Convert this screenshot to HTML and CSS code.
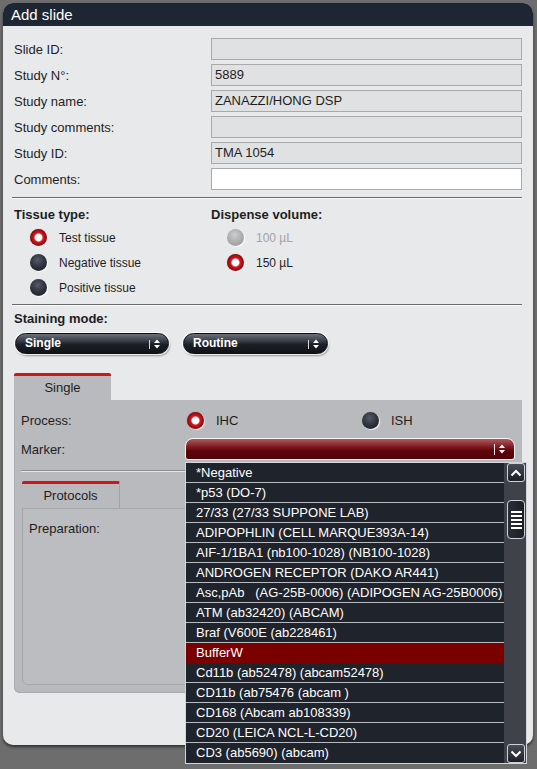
FILE: index.html
```html
<!DOCTYPE html>
<html lang="en">
  <head>
    <meta charset="UTF-8" />
    <meta name="viewport" content="width=device-width, initial-scale=1.0" />
    <title>Add slide</title>
    <link rel="stylesheet" href="styles.css">
  </head>
  <body>
    <div class="dialog">
      <div class="dialog-title">Add slide</div>
      <div class="dialog-body">
        <div class="fields">
          <label>Slide ID:</label><div class="field"></div>
          <label>Study N°:</label><div class="field">5889</div>
          <label>Study name:</label><div class="field">ZANAZZI/HONG DSP</div>
          <label>Study comments:</label><div class="field"></div>
          <label>Study ID:</label><div class="field">TMA 1054</div>
          <label>Comments:</label><div class="field editable"></div>
        </div>

        <hr class="sep sep-first">

        <div class="options">
          <div class="group">
            <div class="group-title">Tissue type:</div>
            <div class="radio-row"><span class="radio on"></span>Test tissue</div>
            <div class="radio-row"><span class="radio"></span>Negative tissue</div>
            <div class="radio-row"><span class="radio"></span>Positive tissue</div>
          </div>
          <div class="group">
            <div class="group-title">Dispense volume:</div>
            <div class="radio-row disabled"><span class="radio off"></span>100 µL</div>
            <div class="radio-row"><span class="radio on"></span>150 µL</div>
          </div>
        </div>

        <hr class="sep sep-second">

        <div class="group-title staining">Staining mode:</div>
        <div class="selects">
          <div class="pill pill-mode">
            <span>Single</span>
            <svg width="14" height="12" viewBox="0 0 14 12"><line x1="1.5" y1="2" x2="1.5" y2="11" stroke="#d8d8d8" /><path d="M6 5 L9 1.5 L12 5Z M6 7 L9 10.5 L12 7Z" fill="#fff" /></svg>
          </div>
          <div class="pill pill-type">
            <span>Routine</span>
            <svg width="14" height="12" viewBox="0 0 14 12"><line x1="1.5" y1="2" x2="1.5" y2="11" stroke="#d8d8d8" /><path d="M6 5 L9 1.5 L12 5Z M6 7 L9 10.5 L12 7Z" fill="#fff" /></svg>
          </div>
        </div>

        <div class="tabs"><div class="tab">Single</div></div>
        <div class="panel">
          <div class="process-row">
            <span>Process:</span>
            <div class="choice"><span class="radio on"></span>IHC</div>
            <div class="choice"><span class="radio"></span>ISH</div>
          </div>
          <div class="marker-row">
            <span>Marker:</span>
            <div class="marker-select">
              <svg width="14" height="12" viewBox="0 0 14 12"><line x1="1.5" y1="1" x2="1.5" y2="12" stroke="#e8e8e8" /><path d="M6 5 L9 1.5 L12 5Z M6 7 L9 10.5 L12 7Z" fill="#fff" /></svg>
            </div>
          </div>
          <hr class="panel-sep">
          <div class="tabs inner-tabs"><div class="tab tab-protocols">Protocols</div></div>
          <div class="inner-panel">
            <div>Preparation:</div>
          </div>
        </div>
      </div>

      <div class="dropdown">
        <ul class="options-list">
          <li>*Negative</li>
          <li>*p53 (DO-7)</li>
          <li>27/33 (27/33 SUPPONE LAB)</li>
          <li>ADIPOPHLIN (CELL MARQUE393A-14)</li>
          <li>AIF-1/1BA1 (nb100-1028) (NB100-1028)</li>
          <li>ANDROGEN RECEPTOR (DAKO AR441)</li>
          <li>Asc,pAb &nbsp; (AG-25B-0006) (ADIPOGEN AG-25B0006)</li>
          <li>ATM (ab32420) (ABCAM)</li>
          <li>Braf (V600E (ab228461)</li>
          <li class="active">BufferW</li>
          <li>Cd11b (ab52478) (abcam52478)</li>
          <li>CD11b (ab75476 (abcam )</li>
          <li>CD168 (Abcam ab108339)</li>
          <li>CD20 (LEICA NCL-L-CD20)</li>
          <li>CD3 (ab5690) (abcam)</li>
        </ul>
        <div class="scroll">
          <div class="scroll-btn">
            <svg width="12" height="8" viewBox="0 0 12 8"><polyline points="1.5,6.5 6,2 10.5,6.5" fill="none" stroke="#fff" stroke-width="2" /></svg>
          </div>
          <div class="thumb">
            <span></span><span></span><span></span><span></span><span></span>
          </div>
          <div class="scroll-btn down">
            <svg width="12" height="8" viewBox="0 0 12 8"><polyline points="1.5,1.5 6,6 10.5,1.5" fill="none" stroke="#fff" stroke-width="2" /></svg>
          </div>
        </div>
      </div>
    </div>
  </body>
</html>
```

FILE: styles.css
```css
html {
  background-color: #6d6d6d;
}

body {
  margin: 0;
  min-height: 769px;
  padding-top: 3px;
  box-sizing: border-box;
  font-family: "Liberation Sans", Arial, sans-serif;
  font-size: 13px;
  color: #1e1e1e;
}

.dialog {
  position: relative;
  margin-left: 3px;
  width: 530px;
  height: 742px;
  background-color: #e8e9eb;
  border-radius: 10px;
  box-shadow: 0 2px 3px rgba(0, 0, 0, 0.55);
}

.dialog-title {
  height: 23px;
  line-height: 23px;
  padding-left: 8px;
  background-color: #1f2633;
  color: white;
  font-size: 15px;
  border-radius: 10px 10px 0 0;
}

.dialog-body {
  padding: 12px 11px 0 11px;
}

/* study fields */
.fields {
  display: grid;
  grid-template-columns: 197px 1fr;
  row-gap: 4px;
  align-items: center;
}

.field {
  height: 20px;
  line-height: 20px;
  padding: 0 3px;
  border: 1px solid #a9a9a9;
  background-color: #e0e1e3;
}

.field.editable {
  background-color: white;
}

.sep {
  height: 0;
  border: 0;
  border-top: 1px solid #6a6a6a;
  border-bottom: 1px solid #fafafa;
  margin: 0 0 0 -2px;
}

.sep-first {
  margin-top: 7px;
}

.sep-second {
  margin-top: 4px;
}

/* radios */
.options {
  display: grid;
  grid-template-columns: 197px 1fr;
  margin-top: 9px;
}

.group-title {
  font-weight: bold;
  line-height: 14px;
  margin-bottom: 3px;
}

.radio-row {
  display: flex;
  align-items: center;
  height: 25px;
  padding-left: 16px;
  font-size: 12px;
}

.radio-row.disabled {
  color: #a3a3a3;
}

.radio {
  flex: none;
  width: 17px;
  height: 17px;
  margin-right: 12px;
  border-radius: 50%;
  background: radial-gradient(circle at 45% 35%, #545b68 0, #2a2f38 55%, #1a1d24 100%);
  box-shadow: 1px 1px 1px rgba(255, 255, 255, 0.9);
}

.radio.on {
  background: radial-gradient(circle, #fff 0, #fff 3.3px, #d11b22 4.6px, #b30f15 6.5px, #7c070b 8.5px);
  box-shadow: 1px 1px 1px rgba(255, 255, 255, 0.9), 0 0 1px rgba(0, 0, 0, 0.4);
}

.radio.off {
  background: radial-gradient(circle at 45% 35%, #cdcdcd 0, #a8a8a8 60%, #939393 100%);
}

/* staining selects */
.staining {
  margin-top: 6px;
}

.selects {
  display: flex;
  gap: 14px;
  margin-top: 7px;
  padding-left: 1px;
}

.pill {
  display: flex;
  align-items: center;
  justify-content: space-between;
  box-sizing: border-box;
  height: 21px;
  padding: 0 6px 0 9px;
  border: 1px solid #0d0f13;
  border-radius: 11px;
  background: linear-gradient(#6b707b 0%, #3a3f49 35%, #1c1f26 55%, #111318 100%);
  box-shadow: 0 0 0 1px rgba(255, 255, 255, 0.8), 1px 2px 2px rgba(0, 0, 0, 0.35);
  color: white;
  font-size: 12px;
  font-weight: bold;
}

.pill span {
  margin-top: -2px;
}

.pill-mode {
  width: 154px;
}

.pill-type {
  width: 145px;
}

/* tabs */
.tabs {
  display: flex;
  margin-top: 19px;
}

.tab {
  width: 97px;
  height: 24px;
  line-height: 24px;
  text-align: center;
  background-color: #b9babd;
  border-top: 3px solid #d0161b;
  border-radius: 2px 2px 0 0;
}

.panel {
  box-sizing: border-box;
  height: 293px;
  padding: 10px 7px 0;
  background-color: #b9babd;
  border-radius: 0 0 6px 6px;
  box-shadow: inset 0 -1px 0 #a9aaad, inset 1px 0 0 #aeafb2;
}

.process-row {
  display: grid;
  grid-template-columns: 165px 175px 1fr;
  align-items: center;
  height: 20px;
}

.choice {
  display: flex;
  align-items: center;
  padding-left: 1px;
}

.marker-row {
  display: grid;
  grid-template-columns: 164px 1fr;
  align-items: center;
  height: 22px;
  margin-top: 8px;
}

.marker-select {
  display: flex;
  justify-content: flex-end;
  align-items: center;
  box-sizing: border-box;
  height: 22px;
  padding-right: 7px;
  border: 1px solid #f4f4f4;
  border-radius: 8px 8px 3px 3px;
  background: linear-gradient(#ad5b5e 0%, #7e1a20 40%, #5e040a 60%, #52020a 100%);
}

.panel-sep {
  height: 0;
  margin: 10px 0 0 0;
  border: 0;
  border-top: 1px solid #8b8c8f;
  border-bottom: 1px solid #e4e5e7;
}

.inner-tabs {
  margin-top: 9px;
  padding-left: 1px;
}

.tab-protocols {
  width: 97px;
  border-right: 1px solid #a3a4a7;
}

.inner-panel {
  box-sizing: border-box;
  height: 177px;
  margin: 0 1px;
  padding: 12px 6px;
  background-color: #bcbdc0;
  border: 1px solid #a6a7aa;
  border-radius: 0 0 6px 6px;
}

/* marker dropdown list */
.dropdown {
  position: absolute;
  left: 182px;
  top: 459px;
  display: flex;
  width: 340px;
  height: 300px;
  border: 1px solid #d4d6da;
  background-color: #1f232c;
}

.options-list {
  width: 318px;
  margin: 0;
  padding: 0;
  list-style: none;
}

.options-list li {
  height: 19px;
  line-height: 20px;
  padding-left: 10px;
  border-bottom: 1px solid #b8bbc1;
  color: white;
  white-space: nowrap;
  overflow: hidden;
}

.options-list li:last-child {
  border-bottom: none;
}

.options-list li.active {
  background-color: #7a0000;
  border-bottom-color: #7a0000;
}

.scroll {
  flex: 1;
  display: flex;
  flex-direction: column;
  padding: 0 1px 0 3px;
  background-color: #3f424a;
}

.scroll-btn {
  display: flex;
  align-items: center;
  justify-content: center;
  box-sizing: border-box;
  height: 19px;
  border: 1px solid #cfd2d7;
  border-radius: 3px;
  background: linear-gradient(#474c57, #1c1f26);
}

.scroll-btn.down {
  margin-top: auto;
}

.thumb {
  display: flex;
  flex-direction: column;
  align-items: center;
  justify-content: center;
  gap: 2px;
  box-sizing: border-box;
  height: 39px;
  margin-top: 18px;
  border: 1px solid #cfd2d7;
  border-radius: 4px;
  background: linear-gradient(90deg, #2a2e36, #1b1e25);
}

.thumb span {
  width: 11px;
  height: 2px;
  background-color: white;
}
```
